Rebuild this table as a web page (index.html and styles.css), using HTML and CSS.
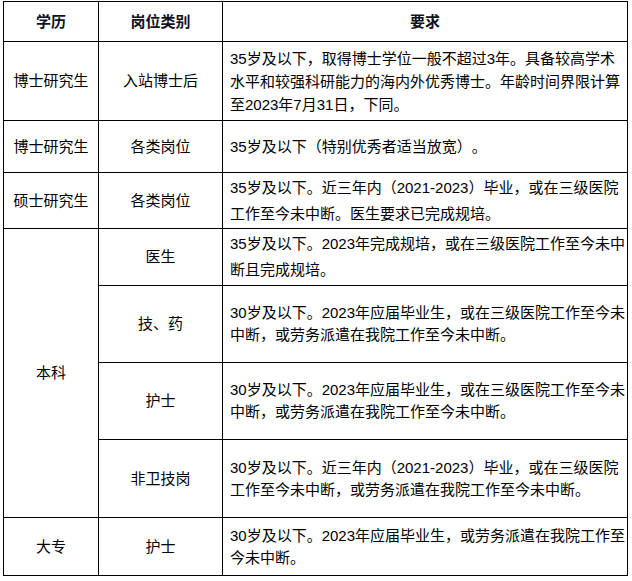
FILE: index.html
```html
<!DOCTYPE html>
<html lang="zh-CN">
<head>
<meta charset="utf-8">
<title>招聘条件</title>
<link rel="stylesheet" href="styles.css">
</head>
<body>
<table class="req">
  <thead>
    <tr class="r-head">
      <th class="c-edu">学历</th>
      <th class="c-post">岗位类别</th>
      <th class="c-req">要求</th>
    </tr>
  </thead>
  <tbody>
    <tr class="r-1 lh-23">
      <td class="center">博士研究生</td>
      <td class="center">入站博士后</td>
      <td class="text">35岁及以下，取得博士学位一般不超过3年。具备较高学术水平和较强科研能力的海内外优秀博士。年龄时间界限计算至2023年7月31日，下同。</td>
    </tr>
    <tr class="r-2">
      <td class="center">博士研究生</td>
      <td class="center">各类岗位</td>
      <td class="text">35岁及以下（特别优秀者适当放宽）。</td>
    </tr>
    <tr class="r-3 lh-26">
      <td class="center">硕士研究生</td>
      <td class="center">各类岗位</td>
      <td class="text">35岁及以下。近三年内（2021-2023）毕业，或在三级医院工作至今未中断。医生要求已完成规培。</td>
    </tr>
    <tr class="r-4 lh-26">
      <td class="center" rowspan="4">本科</td>
      <td class="center">医生</td>
      <td class="text">35岁及以下。2023年完成规培，或在三级医院工作至今未中断且完成规培。</td>
    </tr>
    <tr class="r-5 lh-22">
      <td class="center">技、药</td>
      <td class="text">30岁及以下。2023年应届毕业生，或在三级医院工作至今未中断，或劳务派遣在我院工作至今未中断。</td>
    </tr>
    <tr class="r-6 lh-22">
      <td class="center">护士</td>
      <td class="text">30岁及以下。2023年应届毕业生，或在三级医院工作至今未中断，或劳务派遣在我院工作至今未中断。</td>
    </tr>
    <tr class="r-7 lh-22">
      <td class="center">非卫技岗</td>
      <td class="text">30岁及以下。近三年内（2021-2023）毕业，或在三级医院工作至今未中断，或劳务派遣在我院工作至今未中断。</td>
    </tr>
    <tr class="r-8 lh-22">
      <td class="center">大专</td>
      <td class="center">护士</td>
      <td class="text">30岁及以下。2023年应届毕业生，或劳务派遣在我院工作至今未中断。</td>
    </tr>
  </tbody>
</table>
</body>
</html>
```
FILE: styles.css
```css
html, body {
  margin: 0;
  padding: 0;
  background: #ffffff;
}

body {
  font-family: "Liberation Sans", "Noto Sans CJK SC", sans-serif;
  font-size: 15px;
  color: #000000;
  text-spacing-trim: space-all;
}

.req {
  margin: 1px 0 0 3px;
  width: 625px;
  table-layout: fixed;
  border-collapse: separate;
  border-spacing: 0;
  border-top: 1px solid #000;
  border-left: 1px solid #000;
}

.req th,
.req td {
  box-sizing: border-box;
  border-right: 1px solid #000;
  border-bottom: 1px solid #000;
  padding: 0;
  vertical-align: middle;
}

.req th {
  font-weight: bold;
  text-align: center;
  line-height: 20px;
  color: #111122;
}

.c-edu { width: 95px; }
.c-post { width: 124px; }
.c-req { width: 405px; }

.center {
  text-align: center;
  line-height: 22px;
}

.text {
  text-align: left;
  padding: 0 0 0 7px !important;
}

.lh-23 .text { line-height: 23px; }
.lh-26 .text { line-height: 26px; }
.lh-22 .text { line-height: 22px; }
.r-2 .text { line-height: 22px; }

.r-head { height: 40px; }
.r-1 { height: 79px; }
.r-2 { height: 52px; }
.r-3 { height: 56px; }
.r-4 { height: 57px; }
.r-5 { height: 77px; }
.r-6 { height: 77px; }
.r-7 { height: 78px; }
.r-8 { height: 58px; }
```
